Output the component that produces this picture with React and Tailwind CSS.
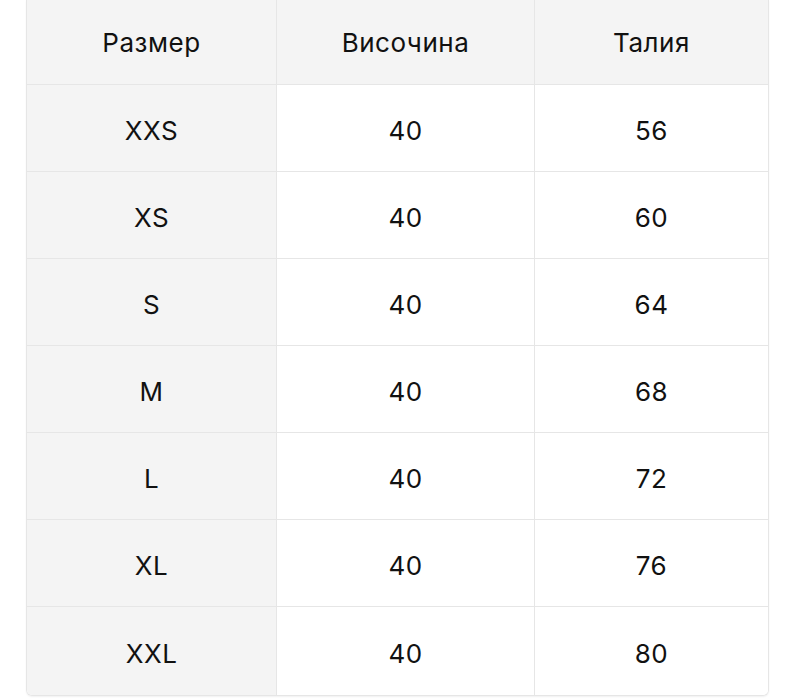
import React from 'react';

const rows = [
  ['XXS', '40', '56'],
  ['XS', '40', '60'],
  ['S', '40', '64'],
  ['M', '40', '68'],
  ['L', '40', '72'],
  ['XL', '40', '76'],
  ['XXL', '40', '80'],
];

function Cell({ children, gray, last, tall }) {
  return (
    <div
      className={
        'flex items-center justify-center border-[#e6e6e6] pt-1 ' +
        (tall ? 'h-[88px] ' : 'h-[87px] border-b ') +
        (last ? '' : 'border-r ') +
        (gray ? 'bg-[#f4f4f4]' : 'bg-white')
      }
    >
      {children}
    </div>
  );
}

export default function App() {
  return (
    <div className="min-h-screen bg-white pl-[26px]" style={{ fontFamily: 'Inter, "Noto Sans", sans-serif' }}>
      <div className="w-[743px] overflow-hidden rounded-b-md border-x border-b border-[#e6e6e6] text-[26px] tracking-[0.02em] text-[#111] shadow-[0_1px_2px_rgba(0,0,0,0.06)]">
        <div className="grid grid-cols-[250px_258px_1fr] bg-[#f4f4f4]">
          <div className="flex h-[85px] items-center justify-center border-b border-r border-[#e6e6e6]">Размер</div>
          <div className="flex h-[85px] items-center justify-center border-b border-r border-[#e6e6e6]">Височина</div>
          <div className="flex h-[85px] items-center justify-center border-b border-[#e6e6e6]">Талия</div>
        </div>
        {rows.map((r, i) => {
          const tall = i === rows.length - 1;
          return (
            <div key={r[0]} className="grid grid-cols-[250px_258px_1fr]">
              <Cell gray tall={tall}>{r[0]}</Cell>
              <Cell tall={tall}>{r[1]}</Cell>
              <Cell last tall={tall}>{r[2]}</Cell>
            </div>
          );
        })}
      </div>
    </div>
  );
}
